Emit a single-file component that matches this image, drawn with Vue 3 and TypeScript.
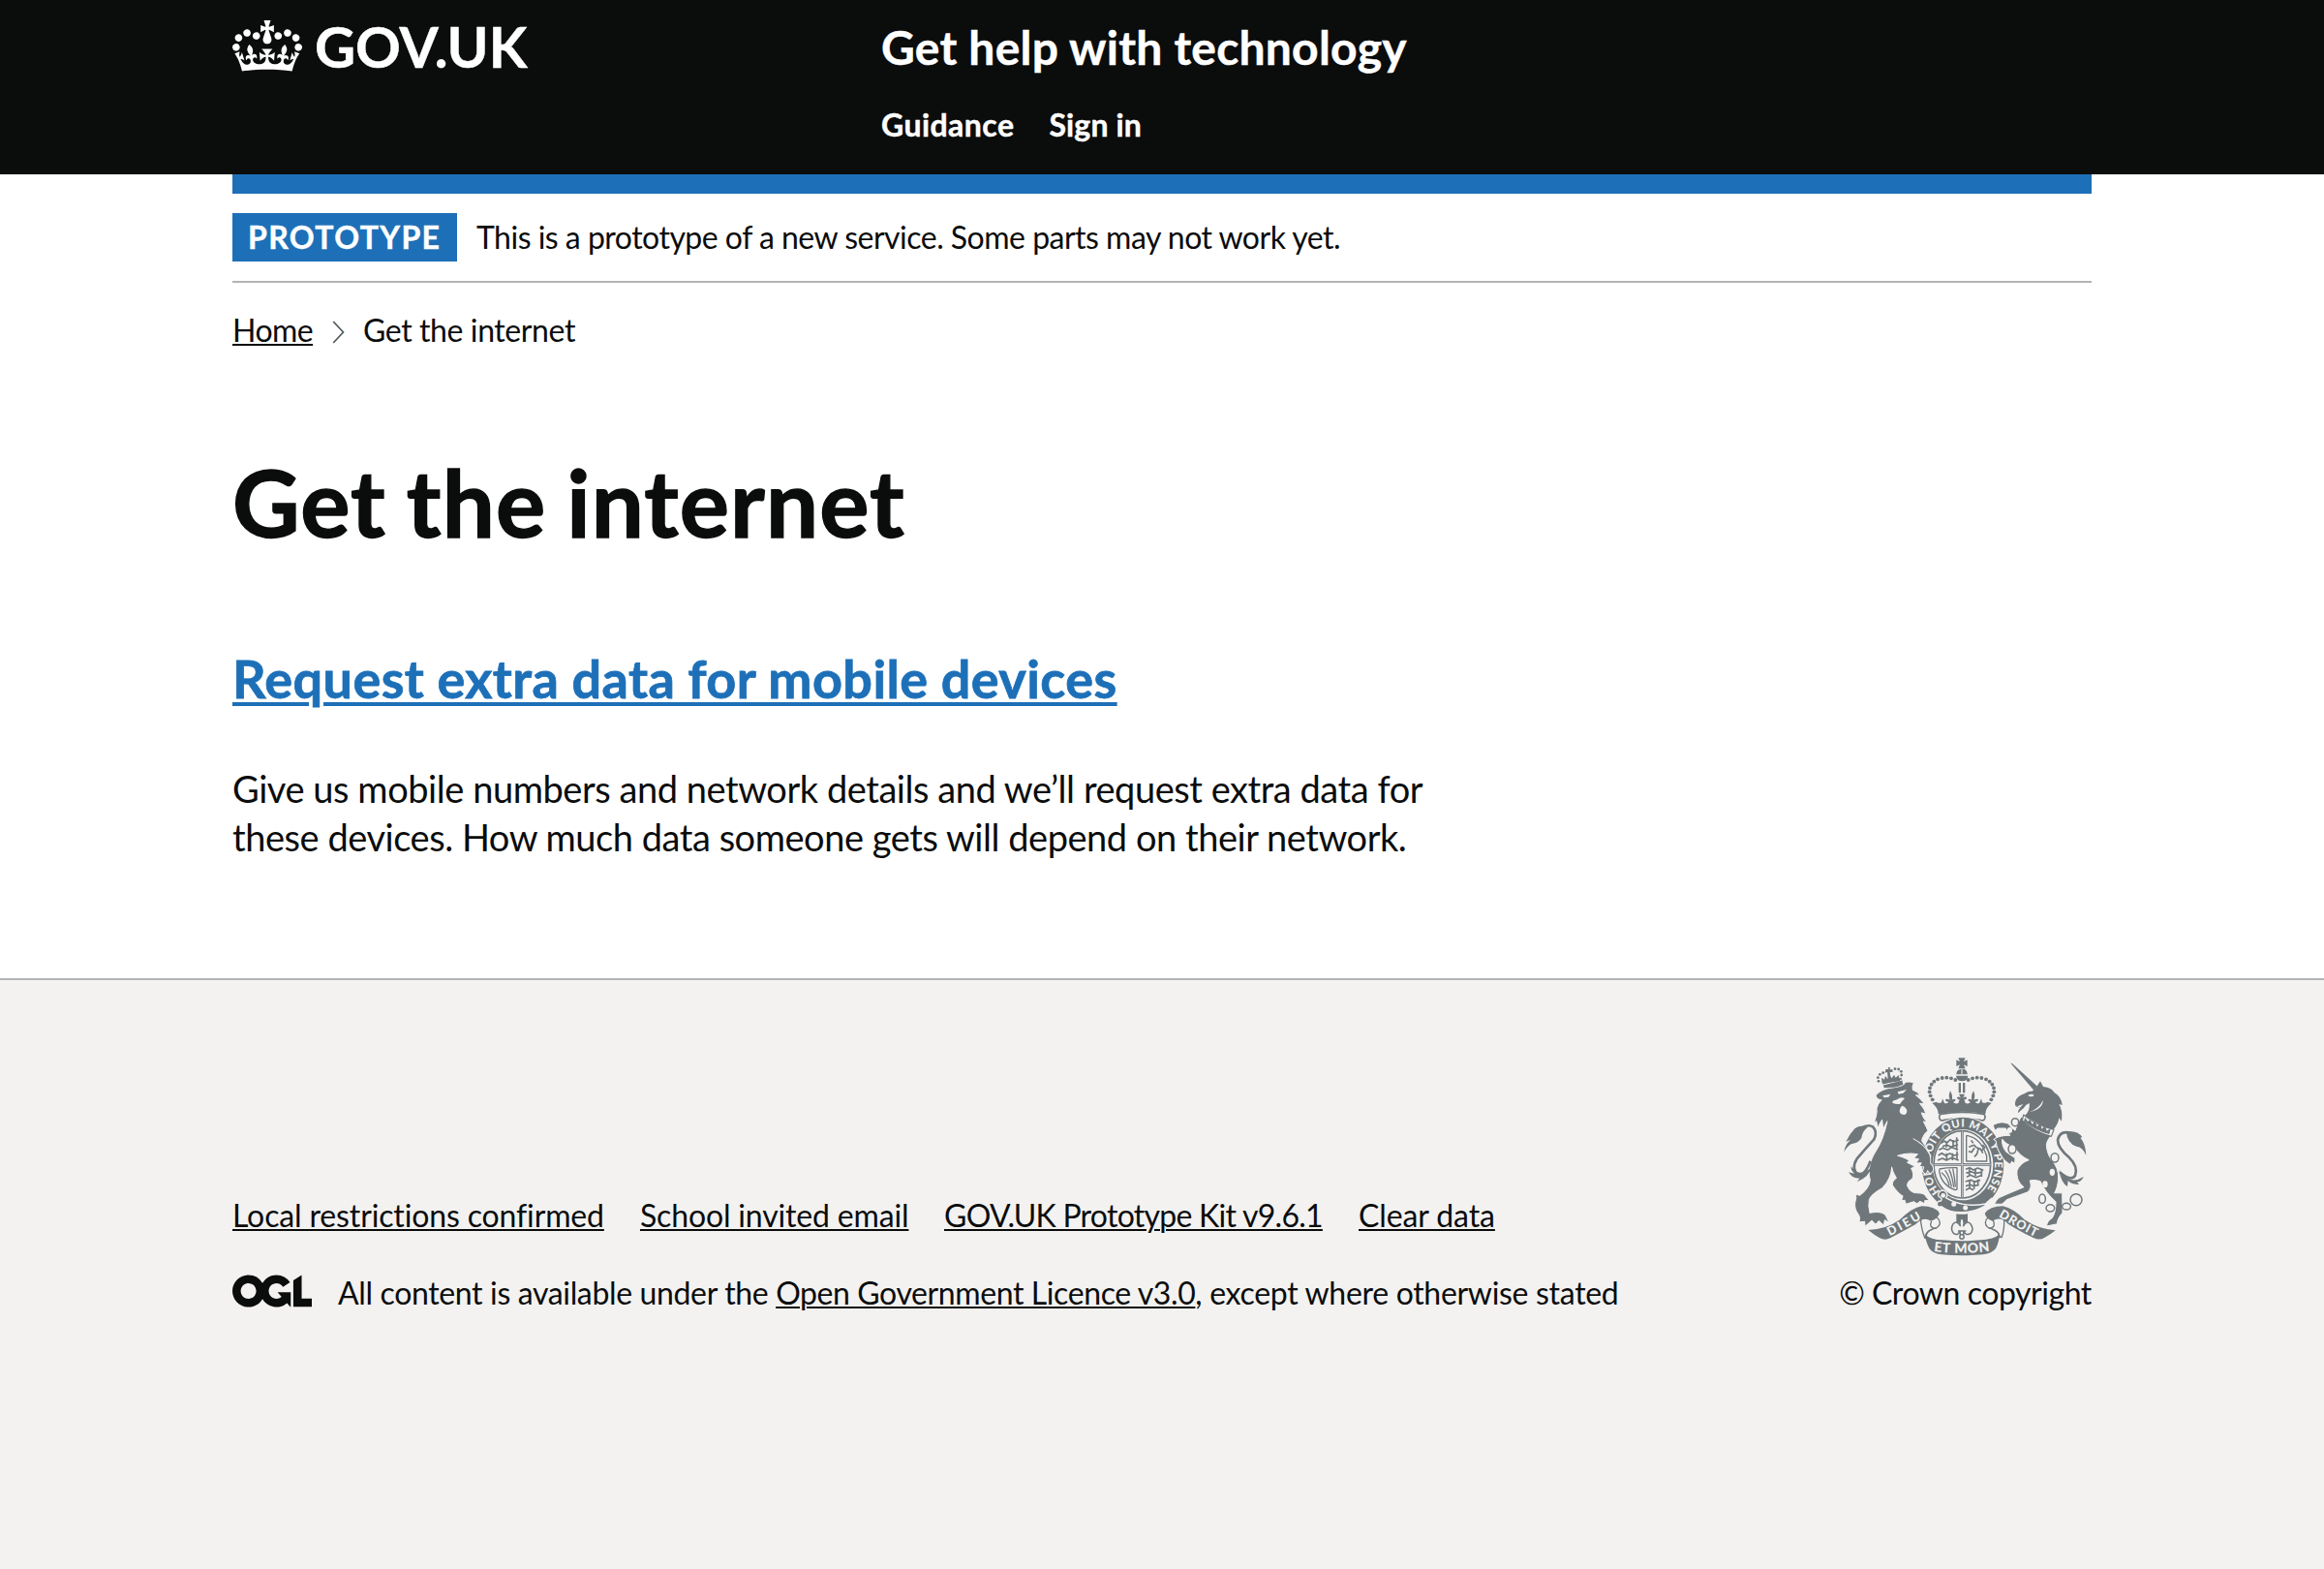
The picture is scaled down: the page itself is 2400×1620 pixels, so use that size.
<script setup lang="ts">
interface FooterLink { label: string; spacing: string; width: number }
interface Dot { x: number; y: number; r: number }

const footerLinks: FooterLink[] = [
  { label: 'Local restrictions confirmed', spacing: '-0.14px', width: 384 },
  { label: 'School invited email', spacing: '-0.16px', width: 277 },
  { label: 'GOV.UK Prototype Kit v9.6.1', spacing: '-0.73px', width: 391 },
  { label: 'Clear data', spacing: '-0.1px', width: 141 },
]

// Pearls on the left half of the central crown; the right half is mirrored.
const pearlPoints: [number, number][] = [
  [417, 134], [404, 129], [390, 127], [376, 128], [362, 132], [351, 139],
  [343, 148], [338, 159], [337, 171], [340, 183], [346, 195],
]
const pearls: Dot[] = pearlPoints.flatMap(([x, y]) => [
  { x, y, r: 5.8 },
  { x: 874 - x, y, r: 5.8 },
])
const lionPearls: [number, number][] = [
  [179, 138], [177, 127], [183, 117], [193, 112], [218, 106], [230, 100], [241, 101], [249, 108], [250, 119],
]
</script>

<template>
  <div class="page">
    <header class="header">
      <div class="container header-row">
        <a class="logo">
          <svg class="crown" viewBox="0 0 132 97" width="72" height="53" aria-hidden="true">
            <path fill="#fff" fill-rule="evenodd" d="M25 30.2c3.5 1.5 7.7-.2 9.1-3.7 1.5-3.6-.2-7.8-3.9-9.2-3.6-1.4-7.6.3-9.1 3.9-1.4 3.5.3 7.5 3.9 9zM9 39.5c3.6 1.5 7.8-.2 9.2-3.7 1.5-3.6-.2-7.8-3.9-9.1-3.6-1.5-7.6.2-9.1 3.8-1.4 3.5.3 7.5 3.8 9zM4.4 57.2c3.5 1.5 7.7-.2 9.1-3.8 1.5-3.6-.2-7.7-3.9-9.1-3.5-1.5-7.6.3-9.1 3.8-1.4 3.5.3 7.6 3.9 9.1zm38.3-21.4c3.5 1.5 7.7-.2 9.1-3.8 1.5-3.6-.2-7.7-3.9-9.1-3.6-1.5-7.6.3-9.1 3.8-1.3 3.6.4 7.7 3.9 9.1zm64.4-5.6c-3.6 1.5-7.8-.2-9.1-3.7-1.5-3.6.2-7.8 3.8-9.2 3.6-1.4 7.7.3 9.2 3.9 1.3 3.5-.4 7.5-3.9 9zm15.9 9.3c-3.6 1.5-7.7-.2-9.1-3.7-1.5-3.6.2-7.8 3.7-9.1 3.6-1.5 7.7.2 9.2 3.8 1.5 3.5-.3 7.5-3.8 9zm4.7 17.7c-3.6 1.5-7.8-.2-9.2-3.8-1.5-3.6.2-7.7 3.9-9.1 3.6-1.5 7.7.3 9.2 3.8 1.3 3.5-.4 7.6-3.9 9.1zM89.3 35.8c-3.6 1.5-7.8-.2-9.2-3.8-1.4-3.6.2-7.7 3.9-9.1 3.6-1.5 7.7.3 9.2 3.8 1.4 3.6-.3 7.7-3.9 9.1zM69.7 17.7l8.9 4.7V9.3l-8.9 2.8c-.2-.3-.5-.6-.9-.9L72.4 0H59.6l3.5 11.2c-.3.3-.6.5-.9.9l-8.8-2.8v13.1l8.8-4.7c.3.3.6.7.9.9l-5 15.4v.1c-.2.8-.4 1.6-.4 2.4 0 4.1 3.1 7.5 7 8.1h.2c.3 0 .7.1 1 .1.4 0 .7 0 1-.1h.2c4-.6 7.1-4.1 7.1-8.1 0-.8-.1-1.7-.4-2.4V34l-5.1-15.4c.4-.2.7-.6 1-.9zM66 92.8c16.9 0 32.8 1.1 47.1 3.2 4-16.9 8.9-26.7 14-33.5l-9.6-3.4c1 4.9 1.1 7.2 0 10.2-1.5-1.4-3-4.3-4.2-8.7L108.6 76c2.8-2 5-3.2 7.5-3.3-4.4 9.4-10 11.9-13.6 11.2-4.3-.8-6.3-4.6-5.6-7.9 1-4.7 5.7-5.9 8-.5 4.3-8.7-3-11.4-7.6-8.8 7.1-7.2 7.9-13.5 2.1-21.1-8 6.1-8.1 12.3-4.5 20.8-4.7-5.4-12.1-2.5-9.5 6.2 3.4-5.2 7.9-2 7.2 3.1-.6 4.3-6.4 7.8-13.5 7.2-10.3-.9-10.9-8-11.2-13.8 2.5-.5 7.1 1.8 11 7.3L80.2 60c-4.1 4.4-8 5.3-12.3 5.4 1.4-4.4 8-11.6 8-11.6H55.5s6.4 7.2 7.9 11.6c-4.2-.1-8-1-12.3-5.4l1.4 16.4c3.9-5.5 8.5-7.7 10.9-7.3-.3 5.8-.9 12.8-11.1 13.8-7.2.6-12.9-2.9-13.5-7.2-.7-5 3.8-8.3 7.1-3.1 2.7-8.7-4.6-11.6-9.4-6.2 3.7-8.5 3.6-14.7-4.6-20.8-5.8 7.6-5 13.9 2.2 21.1-4.7-2.6-11.9.1-7.7 8.8 2.3-5.5 7.1-4.2 8.1.5.7 3.3-1.3 7.1-5.7 7.9-3.5.7-9-1.8-13.5-11.2 2.5.1 4.7 1.3 7.5 3.3l-4.7-15.4c-1.2 4.4-2.7 7.2-4.3 8.7-1.1-3-.9-5.3 0-10.2l-9.5 3.4c5 6.9 9.9 16.7 14 33.5 14.8-2.1 30.8-3.2 47.7-3.2z" />
          </svg>
          <span class="logo-text">GOV.UK</span>
        </a>
        <div class="header-content">
          <a class="service">Get help with technology</a>
          <nav class="nav">
            <a class="nav-guidance">Guidance</a>
            <a>Sign in</a>
          </nav>
        </div>
      </div>
    </header>

    <div class="body">
      <div class="container">
        <div class="blue-bar"></div>
        <div class="phase">
          <strong class="tag">PROTOTYPE</strong>
          <span class="phase-text">This is a prototype of a new service. Some parts may not work yet.</span>
        </div>
        <nav class="crumbs">
          <a class="crumb-home">Home</a>
          <svg class="chevron" width="14" height="24" viewBox="0 0 14 24" fill="none" stroke="#505a5f" stroke-width="1.7">
            <path d="M1.2 1 11.5 12 1.2 23" />
          </svg>
          <span class="crumb-current">Get the internet</span>
        </nav>
        <main>
          <h1>Get the internet</h1>
          <h2><a>Request extra data for mobile devices</a></h2>
          <p>
            <span class="line-one">Give us mobile numbers and network details and we’ll request extra data for</span><br />
            <span class="line-two">these devices. How much data someone gets will depend on their network.</span>
          </p>
        </main>
      </div>
    </div>

    <footer class="footer">
      <div class="container footer-row">
        <div class="meta">
          <nav class="footer-links">
            <a v-for="link in footerLinks" :key="link.label" :style="{ letterSpacing: link.spacing, width: link.width + 'px' }">{{ link.label }}</a>
          </nav>
          <div class="licence">
            <svg class="ogl" viewBox="0 0 483.2 195.7" width="82" height="34" aria-hidden="true">
              <path fill="#0b0c0c" d="M421.5 142.8V.1l-50.7 32.3v161.1h112.4v-50.7zm-122.3-9.6A47.12 47.12 0 0 1 221 97.8c0-26 21.1-47.1 47.1-47.1 16.7 0 31.4 8.7 39.7 21.8l42.7-27.2A97.63 97.63 0 0 0 268.1 0c-36.5 0-68.3 20.1-85.1 49.7A98 98 0 0 0 97.8 0C43.9 0 0 43.9 0 97.8s43.9 97.8 97.8 97.8c36.5 0 68.3-20.1 85.1-49.7a97.76 97.76 0 0 0 149.6 25.4l19.4 22.2h3v-87.8h-80l24.3 27.5zM97.8 145c-26 0-47.1-21.1-47.1-47.1s21.1-47.1 47.1-47.1 47.1 21.1 47.1 47.1S123.8 145 97.8 145" />
            </svg>
            <span class="licence-text"><span class="lt-a">All content is available under the </span><a class="lt-b">Open Government Licence v3.0</a><span class="lt-c">, except where otherwise stated</span></span>
          </div>
        </div>

        <div class="copyright">
          <svg class="arms" viewBox="68 62 758 620" width="252.7" height="206.7" fill="#6f777b" stroke-linejoin="round">
            <defs>
              <path id="motto-ring" d="M369 480A100 117 0 1 1 497 492" />
              <path id="motto-dieu" d="M213 618Q268 590 318 560" />
              <path id="motto-et" d="M350 665Q438 676 526 664" />
              <path id="motto-droit" d="M550 557Q610 593 670 623" />
            </defs>

            <!-- central crown -->
            <path d="M426 66h22l-5 11 11-5v20l-11-5 5 12h-22l5-12-11 5V72l11 5z" />
            <path d="M420 117q0-16 17-17t17 17zM419 121h37q-1 17-18 17t-19-17z" />
            <path d="M437 100v17" stroke="#f3f2f1" stroke-width="3" />
            <path d="M427 143h7v31h-7zM440 143h7v31h-7z" />
            <circle v-for="(p, i) in pearls" :key="i" :cx="p.x" :cy="p.y" :r="p.r" />
            <path d="M358 202Q365 208 374 204L377 192 383 206Q392 208 396 202 386 202 386 194 394 191 400 196 394 183 401 168 410 183 406 196 412 191 418 195 416 203 410 203 417 210 426 206L430 194Q422 197 422 188 429 184 434 190L428 178H446L440 190Q445 184 452 188 452 197 444 194L448 206Q457 210 464 203 458 203 456 195 462 191 468 196 464 183 473 168 480 183 474 196 480 191 488 194 488 202 478 202 482 208 491 206L497 192 500 204Q509 208 516 202L529 206Q510 220 510 240 437 224 364 240 364 220 345 206z" />
            <path d="M372 240q65-12 132 0 7 3 4 14-3 8-12 5-58-12-116 0-9 3-12-5-3-11 4-14z" fill="#f3f2f1" stroke="#6f777b" stroke-width="5" />

            <!-- garter and shield -->
            <ellipse cx="440" cy="397" rx="131" ry="150" fill="#f3f2f1" />
            <ellipse cx="440" cy="397" rx="127" ry="147" />
            <ellipse cx="440" cy="397" rx="94" ry="110" fill="#f3f2f1" />
            <ellipse cx="438" cy="396" rx="88" ry="104" fill="none" stroke="#6f777b" stroke-width="5" />
            <path d="M438 292v205M350 396h177" fill="none" stroke="#6f777b" stroke-width="8" />
            <path d="M438 292v205M350 396h177" fill="none" stroke="#f3f2f1" stroke-width="2" />
            <g fill="none" stroke="#6f777b" stroke-width="5">
              <path d="M373 330l9-7 9 6 10-10 10 7 16-6M377 340l13-5 13 7 22-8M366 351l12-6 15 6 12-8 20 7M389 324v19M410 320v18M421 312v40" />
              <path d="M364 368l11-7 11 7 14-6 13 6 13-4M362 383l15-6 12 6 17-8 21 8M390 361v19M408 361v22M422 355v29" />
              <path d="M449 411l12-5 12 7 13-6 18 7M450 422l16-4 11 5 24-3M452 435l11-6 18 7 15-6M460 407v23M479 408v24M498 412v22" />
              <path d="M448 449l17-5 11 6 18-6M449 463l13-5 11 5 17-4M449 475l12-6 12 6M461 444v28M475 446v26M487 442v20" />
              <path d="M451 306v80h65M451 306q44 6 63 64v16" stroke-width="4" />
              <path d="M459 342l16-6 8 8 12 4 7 13M472 330l-6-9M476 345l-9 13-9-3M488 348l-4 15-8 9M496 355l12-11-7-9" />
              <path d="M367 410q27-5 55-4v66M367 411q2 42 42 61 9 5 14 0M374 421q18 14 24 40M385 414q14 18 20 51M397 411q11 21 15 56M409 409q6 28 8 56" stroke-width="4" />
            </g>
            <g class="motto" fill="#f3f2f1">
              <text font-size="34"><textPath href="#motto-ring" textLength="512" lengthAdjust="spacing">HON&nbsp; SOIT QUI MAL Y PENSE</textPath></text>
            </g>
            <path d="M366 496q-6-12 6-19 12-4 17 6 6 10-2 16 54 32 123 19l19-17q-20 38-89 43-40 2-66-18-12 4-14-6 0-12 12-11 6-8-6-13z" stroke="#f3f2f1" stroke-width="4" />
            <circle cx="379" cy="492" r="7" fill="#f3f2f1" /><circle cx="412" cy="519" r="7.5" fill="#f3f2f1" /><circle cx="448" cy="530" r="7.5" fill="#f3f2f1" />

            <!-- lion -->
            <path stroke="#f3f2f1" stroke-width="3" d="M170 181Q190 160 224 158 258 153 262 141 275 138 288 142 282 155 285 165 300 170 308 182L294 181Q310 192 322 209L307 207Q320 220 326 240L312 236Q318 255 331 265L318 263Q328 280 332 292 316 305 313 322 326 340 337 362 342 380 340 392 352 402 348 416L339 426 331 415 326 427 315 418 319 404 306 402 311 391 295 392 303 379 288 376 300 364Q270 358 238 369 262 375 274 384L268 390 292 402 280 408Q290 425 284 440 266 452 268 462 278 486 300 484 322 484 326 495L336 507 322 508 322 518 308 510 298 518 288 511 264 519 260 507 250 508 254 494Q238 485 222 460 220 448 234 438 222 420 220 404 218 440 192 468 156 488 150 505 146 525 152 546 186 538 200 552L212 576 198 568 195 584 180 571 170 582 158 570 137 588 136 573 118 574Q124 562 116 550 104 535 106 514 112 500 108 487L120 492Q150 470 153 445 148 430 150 410 154 378 172 352 194 318 206 262L193 286 190 258Q182 268 177 284L172 262 164 268Q176 240 173 222 178 205 188 196 172 196 170 181z" />
            <path d="M191 183l25-5-6 9-13 2zM238 171l28-7-11 11-14 3z" fill="#f3f2f1" />
            <path d="M222 205q-1-8 11-9l11-6q10-3 16 2l-8 7-7 10q-14 1-23-4zM252 214q12 4 15 15 0 12-10 13-13-2-13-13 2-12 8-15z" fill="#f3f2f1" />
            <path d="M286 316q35 18 51 48" fill="none" stroke="#f3f2f1" stroke-width="3" />
            <path d="M154 385Q140 424 118 432 92 410 112 378 140 345 165 318 176 296 162 280 148 270 122 284" fill="none" stroke="#6f777b" stroke-width="8" />
            <path d="M72 358Q74 336 92 320L78 325Q90 300 106 284 124 272 144 282 130 292 126 314 116 330 96 332 82 338 72 358zM158 402Q150 436 112 450 118 444 120 438 100 442 86 420L104 424Q92 414 94 402 110 426 130 420 148 416 158 402z" />
            <path d="M196 159L192 143 250 127 255 148Q238 156 225 157 210 158 196 159z" />
            <path d="M193 149l59-15" stroke="#f3f2f1" stroke-width="3" />
            <path d="M190 145l-2-18 9 6 3-12 7 11 4-17 9 14 7-11 5 9 9-8 5 19z" />
            <path d="M201 101h9l-2-6 7 1-1 7 8-1v8l-8-1 2 18-8 2-2-19-7 2z" />
            <circle v-for="([x, y], i) in lionPearls" :key="'l' + i" :cx="x" :cy="y" r="4.2" />

            <!-- unicorn -->
            <path d="M588 82L593 83 672 155 660 166z" />
            <path d="M654 169Q668 162 672 150L680 138 689 155Q716 158 724 174 744 184 748 212L738 209Q750 228 746 262L738 252Q736 270 722 286 710 292 700 284L632 246Q650 226 646 206 634 210 628 222L618 230 612 237Q609 228 618 221L604 216Q600 208 603 200 608 184 632 176 642 168 654 169z" />
            <path d="M641 182q14-7 20 0-8 8-20 0zM608 216l19-7-10 11zM688 197q2 26-42 37 33-13 42-37z" fill="#f3f2f1" />
            <path stroke="#f3f2f1" stroke-width="3" d="M622 246Q660 285 716 304 702 320 699 334 700 360 714 380 738 408 736 440 734 468 724 484L748 484 749 546Q734 562 732 580L700 587Q700 572 716 562 728 548 728 512 696 484 680 448 660 442 648 446 656 470 640 482L578 504Q564 518 560 519L538 519Q544 502 556 497L576 488 628 466Q604 446 608 414 616 392 644 382 614 368 598 340 575 336 562 318 560 340 574 356L602 376 601 394 592 387 587 396Q566 384 558 366 544 346 543 324L536 318Q552 306 586 306L572 284 548 284 540 291 533 274Q558 258 582 270 592 284 602 290 612 262 622 246z" />
            <path d="M628 242Q670 276 722 288L714 309Q664 296 624 260z" fill="#f3f2f1" stroke="#6f777b" stroke-width="3.5" />
            <path d="M629 262L633 250 641 263 648 257 655 271 664 262 670 279 680 268 685 286 695 276 700 292 712 284 708 302Q664 290 629 262z" />
            <path d="M740 420Q775 450 788 430 798 402 770 375 734 345 734 320 740 292 768 297" fill="none" stroke="#6f777b" stroke-width="8" />
            <path d="M760 293Q798 290 810 312L804 313Q820 330 822 368 812 342 792 340 764 332 760 293zM738 412Q752 438 778 444 796 446 814 434 808 450 794 450L800 458Q776 458 766 446L764 464Q744 452 738 412z" />
            <g fill="none" stroke="#6f777b" stroke-width="4.5">
              <ellipse cx="602" cy="265" rx="11" ry="12" fill="#f3f2f1" /><ellipse cx="593" cy="348" rx="12" ry="14" fill="#f3f2f1" />
              <ellipse cx="725" cy="375" rx="12" ry="14" fill="#f3f2f1" /><ellipse cx="686" cy="502" rx="10" ry="14" />
              <ellipse cx="711" cy="531" rx="13" ry="11" /><ellipse cx="761" cy="526" rx="13" ry="10" /><circle cx="791" cy="505" r="18" />
            </g>
            <ellipse cx="585" cy="290" rx="8" ry="9" fill="#f3f2f1" /><ellipse cx="717" cy="420" rx="8" ry="11" fill="#f3f2f1" /><ellipse cx="695" cy="457" rx="8" ry="10" fill="#f3f2f1" />

            <!-- scroll -->
            <g fill="#f3f2f1" stroke="#6f777b" stroke-width="4">
              <path d="M310 575q-3-23 33-20 24 3 26 21 0 16-23 20-18 7-20 23l-4 4q-8-20-12-48z" />
              <path d="M568 575q3-23-31-23-24 3-27 24 0 16 22 20 19 7 22 23l6 3q8-20 8-47z" />
              <path d="M343 572q-10 22 16 22M534 569q10 24-14 25" fill="none" />
              <path d="M345 597q-20 6-22 26 12 8 40 8M532 597q20 6 22 24-12 8-42 10" fill="none" />
            </g>
            <path d="M147 599Q203 597 245 567 283 530 313 525 356 525 368 548 361 565 341 571 318 555 293 582 245 608 215 624 199 632 183 624 165 614 147 599z" />
            <path d="M727 600Q673 596 631 567 597 532 564 525 522 526 508 548 514 566 532 571 557 555 580 580 616 603 660 624 678 632 694 622 712 613 727 600z" />
            <path d="M322 612q18 18 56 18 58 6 118 0 40-2 58-18-2 26-12 44-12 16-40 19-66 6-128 0-30-4-38-20-10-17-14-43z" />
            <g class="motto" fill="#f3f2f1">
              <text font-size="38"><textPath href="#motto-dieu" textLength="113">DIEU</textPath></text>
              <text font-size="42"><textPath href="#motto-et" textLength="174">ET MON</textPath></text>
              <text font-size="38"><textPath href="#motto-droit" textLength="131">DROIT</textPath></text>
            </g>

            <!-- fleur-de-lis pendant -->
            <path d="M420 549q17 3 35 0v28h-35z" />
            <g fill="#f3f2f1" stroke="#6f777b" stroke-width="4.5">
              <path d="M431 603Q424 618 412 610 400 596 410 580 422 568 432 586 428 572 437 558 446 572 442 586 452 568 464 580 476 596 464 610 450 618 443 603L441 616H433z" />
              <circle cx="437" cy="620" r="6.5" />
              <path d="M425 602h25" />
            </g>
          </svg>
          <span class="copy-text">© Crown copyright</span>
        </div>
      </div>
    </footer>
  </div>
</template>

<style>
body { margin: 0; background: #f3f2f1; }
</style>

<style scoped>
.page {
  width: 2400px;
  height: 1620px;
  overflow: hidden;
  background: #f3f2f1;
  color: #0b0c0c;
  font-family: Lato, "Open Sans", sans-serif;
  font-size: 32px;
  line-height: 40px;
  white-space: nowrap;
}
.container { width: 1920px; margin: 0 auto; }
.header { height: 180px; background: #0b0c0c; color: #fff; font-weight: 700; }
.header-row { display: flex; }
.header, .tag, h1, h2 { -webkit-text-stroke: 0.014em currentColor; }
.logo { display: flex; width: 670px; box-sizing: border-box; padding-top: 18px; }
.crown { margin: 3px 13px 0 0; -webkit-text-stroke: 0; }
.logo-text { font-size: 58px; line-height: 60px; }
.header-content { padding-top: 24px; }
.service { display: block; font-size: 48px; line-height: 50px; letter-spacing: 0.22px; }
.nav { display: flex; gap: 36px; margin-top: 35px; }
.nav a { letter-spacing: 0.15px; }
.nav .nav-guidance { letter-spacing: 0.45px; }
.body { height: 830px; background: #fff; }
.blue-bar { height: 20px; background: #1d70b8; }
.phase {
  display: flex;
  align-items: center;
  gap: 20px;
  height: 50px;
  padding: 20px 0;
  border-bottom: 2px solid #b1b4b6;
}
.tag {
  box-sizing: border-box;
  width: 232px;
  height: 50px;
  padding: 5px 16px 0;
  background: #1d70b8;
  color: #fff;
  font-weight: 700;
  letter-spacing: 1.4px;
}
.phase-text { margin-top: -1px; letter-spacing: -0.51px; }
.crumbs { display: flex; align-items: center; margin-top: 29px; height: 40px; }
.crumb-home {
  width: 83px;
  margin-right: 20px;
  letter-spacing: -0.55px;
}
.crumb-home, .footer-links a, .lt-b {
  text-decoration: underline;
  text-decoration-thickness: 2px;
  text-underline-offset: 2px;
}
.chevron { margin: 3px 18px 0 0; }
.crumb-current { letter-spacing: -0.4px; }
h1 { margin: 107px 0 0; font-size: 96px; line-height: 100px; letter-spacing: 1.1px; word-spacing: -3.5px; }
h2 { margin: 103px 0 0; font-size: 54px; line-height: 60px; letter-spacing: 0.4px; word-spacing: -0.4px; color: #1d70b8; }
h2 a { text-decoration: underline; text-decoration-thickness: 4px; text-underline-offset: 4px; }
p { margin: 58px 0 0; font-size: 38px; line-height: 50px; }
.line-one { letter-spacing: -0.45px; }
.line-two { letter-spacing: -0.46px; }
.footer { height: 610px; box-sizing: border-box; border-top: 2px solid #b1b4b6; }
.footer-row { display: flex; justify-content: space-between; align-items: flex-end; height: 343px; }
.footer-links { display: flex; gap: 37px; margin-bottom: 40px; }
.licence { display: flex; }
.ogl { margin: 1px 27px 0 0; }
.lt-a { letter-spacing: -0.35px; }
.lt-b { letter-spacing: -0.4px; }
.lt-c { letter-spacing: -0.31px; }
.copyright { display: flex; flex-direction: column; align-items: center; width: 261px; }
.arms { margin-bottom: 17px; }
.copy-text { letter-spacing: -0.45px; }
.motto { font-family: Lato, "Open Sans", sans-serif; font-weight: 900; }
</style>
